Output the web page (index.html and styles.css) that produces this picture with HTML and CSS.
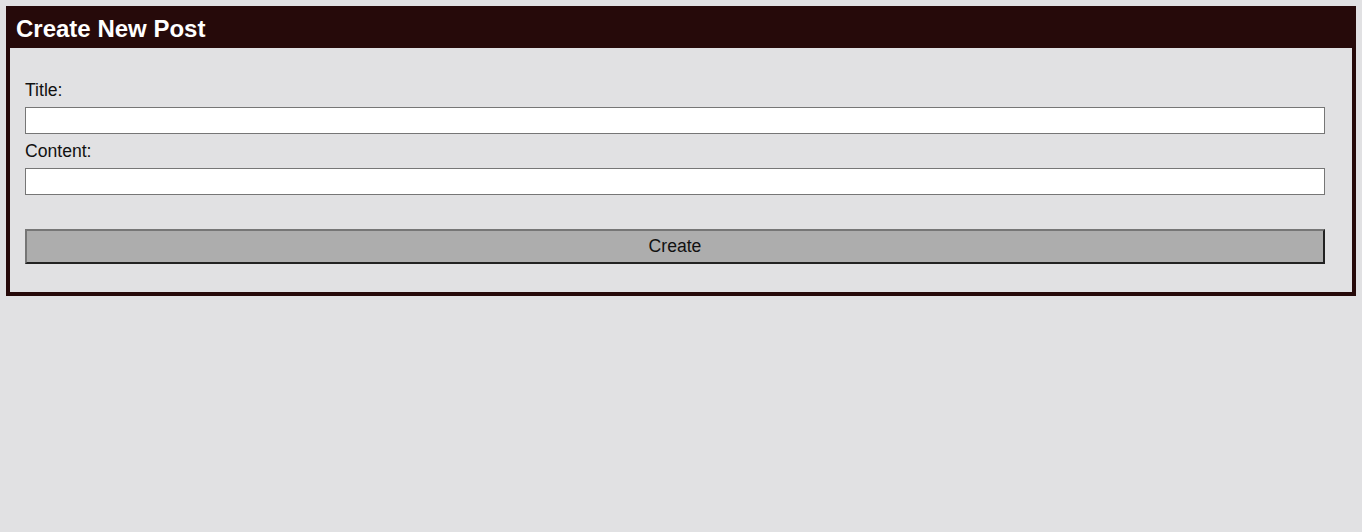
FILE: index.html
```html
<!DOCTYPE html>
<html lang="en">
<head>
<meta charset="utf-8">
<title>Create New Post</title>
<link rel="stylesheet" href="styles.css">
</head>
<body>
  <section class="card">
    <h1 class="card-title">Create New Post</h1>
    <form class="post-form">
      <label class="field-label" for="title">Title:</label>
      <input class="field-input" id="title" type="text">
      <label class="field-label" for="content">Content:</label>
      <input class="field-input" id="content" type="text">
      <button class="submit-btn" type="button">Create</button>
    </form>
  </section>
</body>
</html>
```

FILE: styles.css
```css
html, body {
  margin: 0;
  padding: 0;
}
body {
  background: #e1e1e3;
  padding: 6px;
  font-family: "Liberation Sans", Arial, sans-serif;
  color: #111;
}
.card {
  border: 4px solid #260a0a;
  background: #e1e1e3;
}
.card-title {
  margin: 0;
  background: #260a0a;
  color: #ffffff;
  font-size: 24px;
  font-weight: bold;
  line-height: 37px;
  height: 38px;
  box-sizing: border-box;
  padding: 0 6px 1px;
}
.post-form {
  display: flex;
  flex-direction: column;
  padding: 32px 27px 28px 15px;
}
.field-label {
  display: block;
  font-size: 17.6px;
  line-height: 20px;
}
.field-input {
  display: block;
  box-sizing: border-box;
  height: 27px;
  margin: 7px 0;
  border: 1px solid #767676;
  border-radius: 0;
  background: #ffffff;
  font-family: inherit;
  font-size: 16px;
  padding: 2px 4px;
}
.submit-btn {
  box-sizing: border-box;
  height: 35px;
  margin-top: 27px;
  background: #adadad;
  border-style: solid;
  border-width: 2px;
  border-color: #767676 #222222 #222222 #767676;
  font-family: inherit;
  font-size: 17.6px;
  color: #111;
  padding: 0;
}
```
